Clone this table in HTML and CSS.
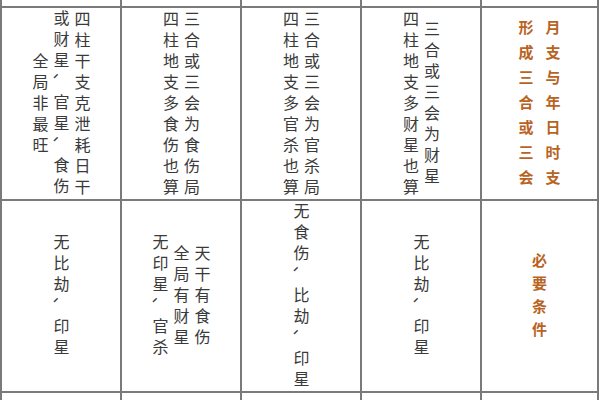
FILE: index.html
```html
<!DOCTYPE html>
<html lang="zh">
<head>
<meta charset="utf-8">
<title>三合三会</title>
<link rel="stylesheet" href="styles.css">
</head>
<body>
<div class="table">
  <div class="cell"></div>
  <div class="cell"></div>
  <div class="cell"></div>
  <div class="cell"></div>
  <div class="cell"></div>

  <div class="cell"><p class="vt">四柱干支克泄耗日干<br>或财星<span class="pm">、</span>官星<span class="pm">、</span>食伤<br>全局非最旺</p></div>
  <div class="cell"><p class="vt">三合或三会为食伤局<br>四柱地支多食伤也算</p></div>
  <div class="cell"><p class="vt">三合或三会为官杀局<br>四柱地支多官杀也算</p></div>
  <div class="cell"><p class="vt">三合或三会为财星<br>四柱地支多财星也算</p></div>
  <div class="cell"><p class="vt head">月支与年日时支<br>形成三合或三会</p></div>

  <div class="cell"><p class="vt">无比劫<span class="pm">、</span>印星</p></div>
  <div class="cell"><p class="vt">天干有食伤<br>全局有财星<br>无印星<span class="pm">、</span>官杀</p></div>
  <div class="cell"><p class="vt">无食伤<span class="pm">、</span>比劫<span class="pm">、</span>印星</p></div>
  <div class="cell"><p class="vt">无比劫<span class="pm">、</span>印星</p></div>
  <div class="cell"><p class="vt head head2">必要条件</p></div>

  <div class="cell"></div>
  <div class="cell"></div>
  <div class="cell"></div>
  <div class="cell"></div>
  <div class="cell"></div>
</div>
</body>
</html>
```

FILE: styles.css
```css
html, body {
  margin: 0;
  padding: 0;
  background: #ffffff;
  overflow: hidden;
}

body {
  width: 600px;
  height: 400px;
  font-family: "Noto Sans CJK SC", "Noto Sans", sans-serif;
}

.table {
  display: grid;
  grid-template-columns: 118px 118px 118px 118px 115px;
  grid-template-rows: 6px 191px 190px 7px;
  gap: 2px;
  padding: 0 2px;
  width: 599px;
  box-sizing: border-box;
  background: #7a7a7a;
}

.cell {
  background: #ffffff;
  display: flex;
  align-items: center;
  justify-content: center;
  overflow: hidden;
}

.vt {
  margin: 0;
  padding-top: 3px;
  white-space: nowrap;
  writing-mode: vertical-rl;
  text-align: center;
  font-size: 16px;
  letter-spacing: 5px;
  line-height: 21px;
  color: #3a3a3a;
}

.pm {
  text-orientation: sideways;
}

.head {
  color: #b8631f;
  font-weight: 700;
  font-size: 15px;
  letter-spacing: 10px;
  line-height: 27px;
  padding-top: 8px;
}

.head2 {
  letter-spacing: 8px;
  padding-top: 6px;
}
```
